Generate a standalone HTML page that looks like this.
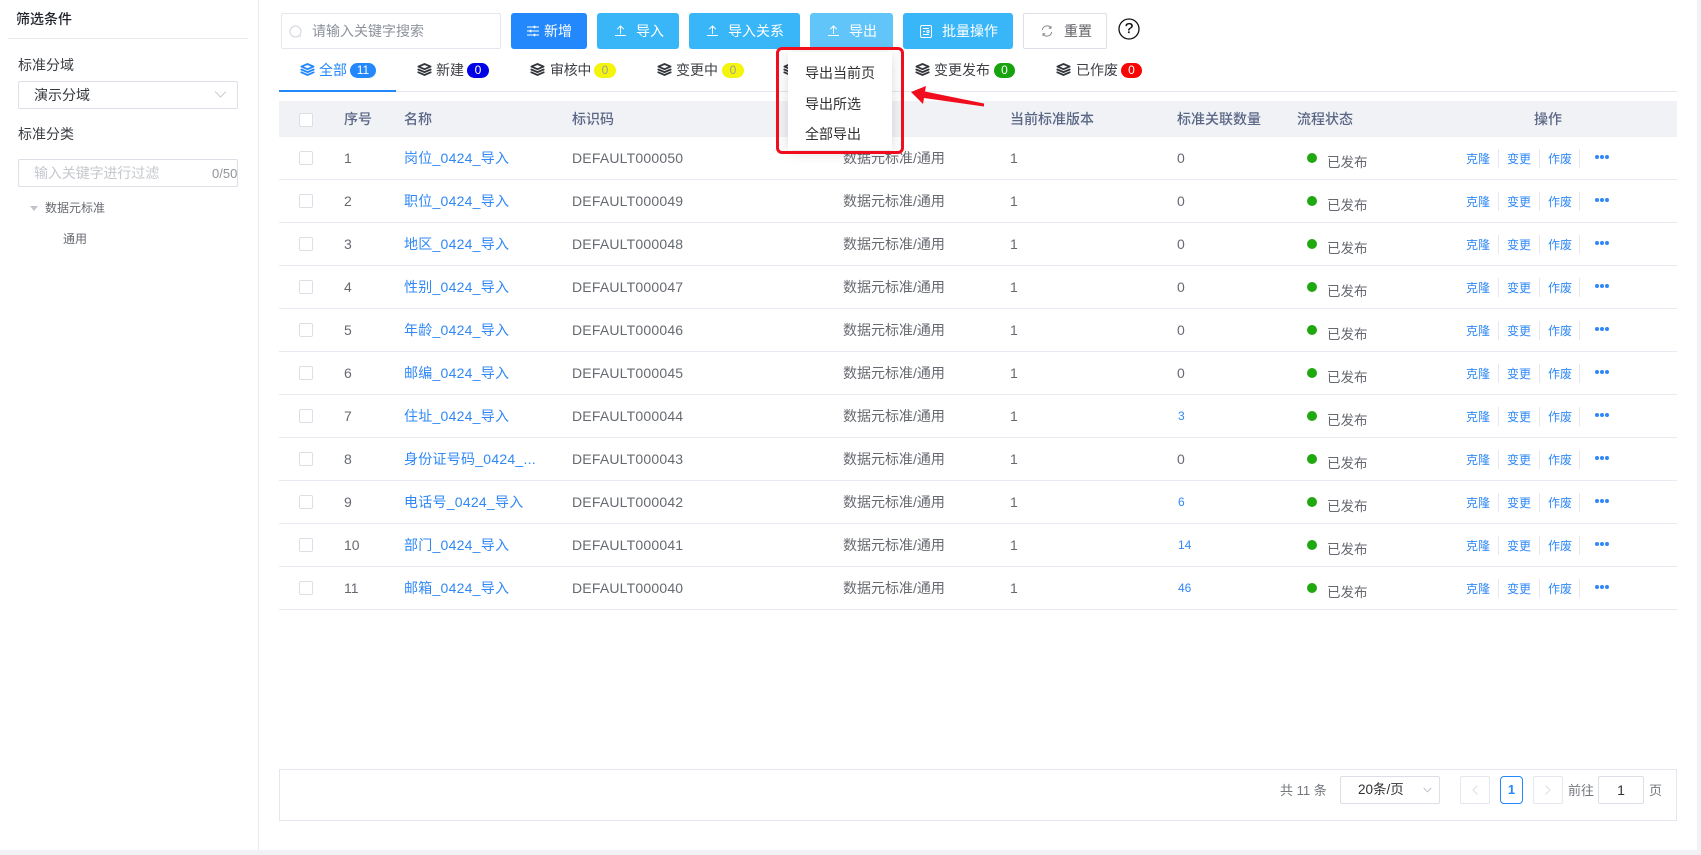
<!DOCTYPE html>
<html lang="zh-CN">
<head>
<meta charset="utf-8">
<title>标准管理</title>
<style>
html,body{margin:0;padding:0;width:1701px;height:855px;overflow:hidden;background:#fff}
body{position:relative;font-family:"Liberation Sans","Noto Sans CJK SC",sans-serif;font-size:14px;color:#606266}
.t{position:absolute;white-space:nowrap}
.btn{position:absolute;top:13px;height:36px;border-radius:3px;background:#38b6f8;color:#fff;line-height:36px;font-size:14px;white-space:nowrap}
.btn span{position:absolute;top:0}
.btn svg{position:absolute}
.tab{position:absolute;top:60px;line-height:20px;font-size:14px;color:#3d3f45;white-space:nowrap}
.bd{position:absolute;top:63px;height:15px;border-radius:8px;line-height:15px;text-align:center;font-size:12px;color:#fff}
.ic{position:absolute;top:63px;width:15px;height:13px}
.th{position:absolute;top:101px;line-height:36px;font-size:14px;font-weight:500;color:#5a6685;white-space:nowrap}
.r{position:absolute;left:279px;width:1398px;height:43px;box-sizing:border-box;border-bottom:1px solid #e9ebf2}
.r>*{position:absolute;white-space:nowrap}
.r i{left:20px;top:14px;width:14px;height:14px;box-sizing:border-box;border:1px solid #dcdfe6;border-radius:2px;background:#fff}
.r .n,.r .c,.r .v,.r .q{top:0;line-height:42px;color:#666a70;font-size:14px}
.r .n{left:65px}
.r .l{left:125px;top:0;line-height:42px;color:#2f88f5;font-size:14px;letter-spacing:.25px}
.r .c{left:293px;letter-spacing:.2px}
.r .k{left:564px;top:0;line-height:43px;font-size:14px;color:#666a70}
.r .v{left:731px}
.r .q{left:898px}
.r .b{left:899px;top:0;line-height:43px;font-size:12px;color:#2f88f5}
.r u{left:1028px;top:16px;width:10px;height:10px;border-radius:50%;background:#1fa80f}
.r .s{left:1048px;top:5px;line-height:42px;font-size:13.5px;color:#666a70}
.r .o1,.r .o2,.r .o3{top:0;line-height:44px;font-size:12px;color:#2f88f5;text-decoration:none}
.r .o1{left:1187px}.r .o2{left:1228px}.r .o3{left:1269px}
.r b{top:12px;width:1px;height:19px;background:#e6e8ee}
.r em{left:1316px;top:18px;width:14px;height:4px;display:block}
.r em::before{content:"";position:absolute;left:0;top:0;width:4px;height:4px;border-radius:50%;background:#2f88f5;box-shadow:5px 0 0 #2f88f5,10px 0 0 #2f88f5}
.box{position:absolute;box-sizing:border-box;background:#fff;border:1px solid #dcdfe6;border-radius:2px}
.item{position:absolute;left:805px;line-height:20px;font-size:14px;color:#303133;white-space:nowrap}
</style>
</head>
<body>
<svg width="0" height="0" style="position:absolute">
<defs>
<symbol id="layers" viewBox="0 0 15 13"><path d="M7.5 1 13.6 3.6 7.5 6.2 1.4 3.6Z" fill="none" stroke="currentColor" stroke-width="1.8" stroke-linejoin="round"/><path d="M1.3 6.5 7.5 9.1 13.7 6.5" fill="none" stroke="currentColor" stroke-width="1.8" stroke-linecap="round"/><path d="M1.3 9.3 7.5 12 13.7 9.3" fill="none" stroke="currentColor" stroke-width="1.8" stroke-linecap="round"/></symbol>
<symbol id="up" viewBox="0 0 11 11"><path d="M5.5 9V1M2.2 4.2 5.5 1 8.8 4.2M0 10.5h11" fill="none" stroke="#fff" stroke-width="1"/></symbol>
</defs>
</svg>

<!-- outer strips -->
<div style="position:absolute;left:1697px;top:0;width:4px;height:855px;background:#f0f2f5"></div>
<div style="position:absolute;left:0;top:850px;width:1701px;height:5px;background:#f0f2f5"></div>
<div style="position:absolute;left:258px;top:0;width:1px;height:850px;background:#e9ebf0"></div>

<!-- sidebar -->
<div class="t" style="left:16px;top:9px;line-height:20px;font-weight:500;color:#1f2329">筛选条件</div>
<div style="position:absolute;left:8px;top:38px;width:240px;height:1px;background:#e9ebf0"></div>
<div class="t" style="left:18px;top:55px;line-height:20px;color:#3a3d42">标准分域</div>
<div class="box" style="left:18px;top:81px;width:220px;height:28px"></div>
<div class="t" style="left:34px;top:85px;line-height:20px;color:#33363b">演示分域</div>
<svg style="position:absolute;left:214px;top:90px" width="13" height="9" viewBox="0 0 13 9"><path d="M1 1.5 6.5 7 12 1.5" fill="none" stroke="#c9ccd3" stroke-width="1"/></svg>
<div class="t" style="left:18px;top:124px;line-height:20px;color:#3a3d42">标准分类</div>
<div class="box" style="left:18px;top:159px;width:220px;height:28px"></div>
<div class="t" style="left:34px;top:163px;line-height:20px;font-size:14px;color:#c5c8ce;letter-spacing:-.1px">输入关键字进行过滤</div>
<div class="t" style="left:212px;top:164px;line-height:20px;font-size:13px;color:#909399">0/50</div>
<div style="position:absolute;left:30px;top:206px;width:0;height:0;border-left:4px solid transparent;border-right:4px solid transparent;border-top:5px solid #c0c4cc"></div>
<div class="t" style="left:45px;top:198px;line-height:20px;font-size:12px;color:#666a70">数据元标准</div>
<div class="t" style="left:63px;top:229px;line-height:20px;font-size:12px;color:#666a70">通用</div>

<!-- search -->
<div class="box" style="left:281px;top:13px;width:220px;height:36px;border-color:#e4e7ed"></div>
<svg style="position:absolute;left:289px;top:25px" width="14" height="15" viewBox="0 0 14 15"><circle cx="6.5" cy="6.5" r="5.5" fill="none" stroke="#d0d3d9"/><path d="M10.5 10.5 11.8 11.8" stroke="#d0d3d9" fill="none"/></svg>
<div class="t" style="left:312px;top:21px;line-height:20px;color:#8d929c">请输入关键字搜索</div>

<!-- buttons -->
<div class="btn" style="left:511px;width:76px;background:#2288fb">
<svg style="left:16px;top:12px" width="12" height="12" viewBox="0 0 12 12"><path d="M0 2h12M0 6h12M0 10h12" stroke="#fff" stroke-width="1" fill="none"/><path d="M7.5 .7v2.6M3.5 4.7v2.6M7.5 8.7v2.6" stroke="#fff" stroke-width="1.6" fill="none"/></svg>
<span style="left:33px">新增</span></div>
<div class="btn" style="left:597px;width:82px"><svg style="left:18px;top:12px" width="11" height="11"><use href="#up"/></svg><span style="left:39px">导入</span></div>
<div class="btn" style="left:689px;width:111px"><svg style="left:18px;top:12px" width="11" height="11"><use href="#up"/></svg><span style="left:39px">导入关系</span></div>
<div class="btn" style="left:810px;width:83px;background:#61c5f9"><svg style="left:18px;top:12px" width="11" height="11"><use href="#up"/></svg><span style="left:39px">导出</span></div>
<div class="btn" style="left:903px;width:110px">
<svg style="left:17px;top:12px" width="12" height="13" viewBox="0 0 12 13"><rect x=".5" y=".5" width="11" height="12" rx="1.5" fill="none" stroke="#fff"/><path d="M3 3.5h6M3 6.5h2M3 9.5h6" stroke="#fff" fill="none"/><circle cx="8" cy="6.5" r="1.1" fill="none" stroke="#fff"/></svg>
<span style="left:39px">批量操作</span></div>
<div class="box" style="left:1023px;top:13px;width:84px;height:36px;border-color:#dcdfe6"></div>
<svg style="position:absolute;left:1041px;top:25px" width="12" height="12" viewBox="0 0 13 13"><path d="M1.5 5.5A5 5 0 0 1 10.5 3M11.5 7.5A5 5 0 0 1 2.5 10" fill="none" stroke="#80848a" stroke-width="1"/><path d="M10.8 1v2.5H8.3M2.2 12V9.5h2.5" fill="none" stroke="#80848a" stroke-width="1"/></svg>
<div class="t" style="left:1064px;top:21px;line-height:20px;color:#606266">重置</div>
<svg style="position:absolute;left:1118px;top:18px" width="22" height="22" viewBox="0 0 22 22"><circle cx="11" cy="11" r="10" fill="#fff" stroke="#111" stroke-width="1.3"/></svg>
<div class="t" style="left:1118px;top:18px;width:22px;text-align:center;line-height:22px;font-size:15px;color:#111;-webkit-text-stroke:.3px #111">?</div>

<!-- tabs -->
<div style="position:absolute;left:279px;top:91px;width:1398px;height:1px;background:#e4e7ed"></div>
<div style="position:absolute;left:279px;top:90px;width:117px;height:2px;background:#2288fb"></div>
<svg class="ic" style="left:300px;color:#2288fb"><use href="#layers"/></svg>
<div class="tab" style="left:319px;color:#2288fb">全部</div><div class="bd" style="left:350px;width:26px;background:#2288fb">11</div>
<svg class="ic" style="left:417px;color:#33363b"><use href="#layers"/></svg>
<div class="tab" style="left:436px">新建</div><div class="bd" style="left:467px;width:22px;background:#0000e6">0</div>
<svg class="ic" style="left:530px;color:#33363b"><use href="#layers"/></svg>
<div class="tab" style="left:550px;letter-spacing:-.3px">审核中</div><div class="bd" style="left:594px;width:22px;background:#f4f40c;color:#a0a090">0</div>
<svg class="ic" style="left:657px;color:#33363b"><use href="#layers"/></svg>
<div class="tab" style="left:676px">变更中</div><div class="bd" style="left:722px;width:22px;background:#f4f40c;color:#a0a090">0</div>
<svg class="ic" style="left:783px;color:#33363b"><use href="#layers"/></svg>
<svg class="ic" style="left:915px;color:#33363b"><use href="#layers"/></svg>
<div class="tab" style="left:934px">变更发布</div><div class="bd" style="left:994px;width:21px;background:#16a30d">0</div>
<svg class="ic" style="left:1056px;color:#33363b"><use href="#layers"/></svg>
<div class="tab" style="left:1076px">已作废</div><div class="bd" style="left:1121px;width:21px;background:#f80606">0</div>

<!-- table header -->
<div style="position:absolute;left:279px;top:101px;width:1398px;height:36px;background:#f0f2f6"></div>
<div style="position:absolute;left:299px;top:113px;width:14px;height:14px;box-sizing:border-box;border:1px solid #dcdfe6;border-radius:2px;background:#fff"></div>
<div class="th" style="left:344px">序号</div>
<div class="th" style="left:404px">名称</div>
<div class="th" style="left:572px">标识码</div>
<div class="th" style="left:1010px">当前标准版本</div>
<div class="th" style="left:1177px">标准关联数量</div>
<div class="th" style="left:1297px">流程状态</div>
<div class="th" style="left:1534px">操作</div>

<!-- rows -->
<div class="r" style="top:137px"><i></i><span class="n">1</span><span class="l">岗位_0424_导入</span><span class="c">DEFAULT000050</span><span class="k">数据元标准/通用</span><span class="v">1</span><span class="q">0</span><u></u><span class="s">已发布</span><span class="o1">克隆</span><b style="left:1219px"></b><span class="o2">变更</span><b style="left:1260px"></b><span class="o3">作废</span><b style="left:1300px"></b><em></em></div>
<div class="r" style="top:180px"><i></i><span class="n">2</span><span class="l">职位_0424_导入</span><span class="c">DEFAULT000049</span><span class="k">数据元标准/通用</span><span class="v">1</span><span class="q">0</span><u></u><span class="s">已发布</span><span class="o1">克隆</span><b style="left:1219px"></b><span class="o2">变更</span><b style="left:1260px"></b><span class="o3">作废</span><b style="left:1300px"></b><em></em></div>
<div class="r" style="top:223px"><i></i><span class="n">3</span><span class="l">地区_0424_导入</span><span class="c">DEFAULT000048</span><span class="k">数据元标准/通用</span><span class="v">1</span><span class="q">0</span><u></u><span class="s">已发布</span><span class="o1">克隆</span><b style="left:1219px"></b><span class="o2">变更</span><b style="left:1260px"></b><span class="o3">作废</span><b style="left:1300px"></b><em></em></div>
<div class="r" style="top:266px"><i></i><span class="n">4</span><span class="l">性别_0424_导入</span><span class="c">DEFAULT000047</span><span class="k">数据元标准/通用</span><span class="v">1</span><span class="q">0</span><u></u><span class="s">已发布</span><span class="o1">克隆</span><b style="left:1219px"></b><span class="o2">变更</span><b style="left:1260px"></b><span class="o3">作废</span><b style="left:1300px"></b><em></em></div>
<div class="r" style="top:309px"><i></i><span class="n">5</span><span class="l">年龄_0424_导入</span><span class="c">DEFAULT000046</span><span class="k">数据元标准/通用</span><span class="v">1</span><span class="q">0</span><u></u><span class="s">已发布</span><span class="o1">克隆</span><b style="left:1219px"></b><span class="o2">变更</span><b style="left:1260px"></b><span class="o3">作废</span><b style="left:1300px"></b><em></em></div>
<div class="r" style="top:352px"><i></i><span class="n">6</span><span class="l">邮编_0424_导入</span><span class="c">DEFAULT000045</span><span class="k">数据元标准/通用</span><span class="v">1</span><span class="q">0</span><u></u><span class="s">已发布</span><span class="o1">克隆</span><b style="left:1219px"></b><span class="o2">变更</span><b style="left:1260px"></b><span class="o3">作废</span><b style="left:1300px"></b><em></em></div>
<div class="r" style="top:395px"><i></i><span class="n">7</span><span class="l">住址_0424_导入</span><span class="c">DEFAULT000044</span><span class="k">数据元标准/通用</span><span class="v">1</span><span class="b">3</span><u></u><span class="s">已发布</span><span class="o1">克隆</span><b style="left:1219px"></b><span class="o2">变更</span><b style="left:1260px"></b><span class="o3">作废</span><b style="left:1300px"></b><em></em></div>
<div class="r" style="top:438px"><i></i><span class="n">8</span><span class="l">身份证号码_0424_...</span><span class="c">DEFAULT000043</span><span class="k">数据元标准/通用</span><span class="v">1</span><span class="q">0</span><u></u><span class="s">已发布</span><span class="o1">克隆</span><b style="left:1219px"></b><span class="o2">变更</span><b style="left:1260px"></b><span class="o3">作废</span><b style="left:1300px"></b><em></em></div>
<div class="r" style="top:481px"><i></i><span class="n">9</span><span class="l">电话号_0424_导入</span><span class="c">DEFAULT000042</span><span class="k">数据元标准/通用</span><span class="v">1</span><span class="b">6</span><u></u><span class="s">已发布</span><span class="o1">克隆</span><b style="left:1219px"></b><span class="o2">变更</span><b style="left:1260px"></b><span class="o3">作废</span><b style="left:1300px"></b><em></em></div>
<div class="r" style="top:524px"><i></i><span class="n">10</span><span class="l">部门_0424_导入</span><span class="c">DEFAULT000041</span><span class="k">数据元标准/通用</span><span class="v">1</span><span class="b">14</span><u></u><span class="s">已发布</span><span class="o1">克隆</span><b style="left:1219px"></b><span class="o2">变更</span><b style="left:1260px"></b><span class="o3">作废</span><b style="left:1300px"></b><em></em></div>
<div class="r" style="top:567px"><i></i><span class="n">11</span><span class="l">邮箱_0424_导入</span><span class="c">DEFAULT000040</span><span class="k">数据元标准/通用</span><span class="v">1</span><span class="b">46</span><u></u><span class="s">已发布</span><span class="o1">克隆</span><b style="left:1219px"></b><span class="o2">变更</span><b style="left:1260px"></b><span class="o3">作废</span><b style="left:1300px"></b><em></em></div>

<!-- pagination -->
<div style="position:absolute;left:279px;top:769px;width:1398px;height:52px;box-sizing:border-box;border:1px solid #e4e7ed"></div>
<div class="t" style="left:1280px;top:781px;line-height:20px;font-size:13px;color:#74787e">共 11 条</div>
<div class="box" style="left:1340px;top:776px;width:100px;height:28px"></div>
<div class="t" style="left:1358px;top:780px;line-height:20px;font-size:13.5px;color:#303133">20条/页</div>
<svg style="position:absolute;left:1423px;top:787px" width="9" height="6" viewBox="0 0 9 6"><path d="M.7 1 4.5 4.8 8.3 1" fill="none" stroke="#c0c4cc"/></svg>
<div class="box" style="left:1460px;top:776px;width:30px;height:28px;border-color:#e4e7ed"></div>
<svg style="position:absolute;left:1472px;top:785px" width="6" height="10" viewBox="0 0 6 10"><path d="M5.5 .5 1 5 5.5 9.5" fill="none" stroke="#dcdfe6"/></svg>
<div class="box" style="left:1500px;top:776px;width:23px;height:28px;border-color:#2288fb;border-radius:4px;color:#2288fb;text-align:center;line-height:26px;font-size:13px;font-weight:700">1</div>
<div class="box" style="left:1533px;top:776px;width:30px;height:28px;border-color:#e4e7ed"></div>
<svg style="position:absolute;left:1545px;top:785px" width="6" height="10" viewBox="0 0 6 10"><path d="M.5 .5 5 5 .5 9.5" fill="none" stroke="#dcdfe6"/></svg>
<div class="t" style="left:1568px;top:781px;line-height:20px;font-size:13px;color:#74787e">前往</div>
<div class="box" style="left:1598px;top:776px;width:46px;height:28px;text-align:center;line-height:26px;color:#303133">1</div>
<div class="t" style="left:1649px;top:781px;line-height:20px;font-size:13px;color:#74787e">页</div>

<!-- dropdown -->
<div style="position:absolute;left:788px;top:52px;width:104px;height:98px;background:#fff;box-shadow:0 2px 12px rgba(0,0,0,.14)"></div>
<div class="item" style="top:63px">导出当前页</div>
<div class="item" style="top:94px">导出所选</div>
<div class="item" style="top:124px">全部导出</div>
<div style="position:absolute;left:776px;top:47px;width:128px;height:107px;box-sizing:border-box;border:3px solid #f00d1d;border-radius:6px"></div>
<svg style="position:absolute;left:905px;top:82px" width="84" height="28" viewBox="0 0 84 28"><path d="M6 10 21 4 20 9.5 79 21.5 79 24.5 19 16 18 22Z" fill="#f00d1d"/></svg>
</body>
</html>
